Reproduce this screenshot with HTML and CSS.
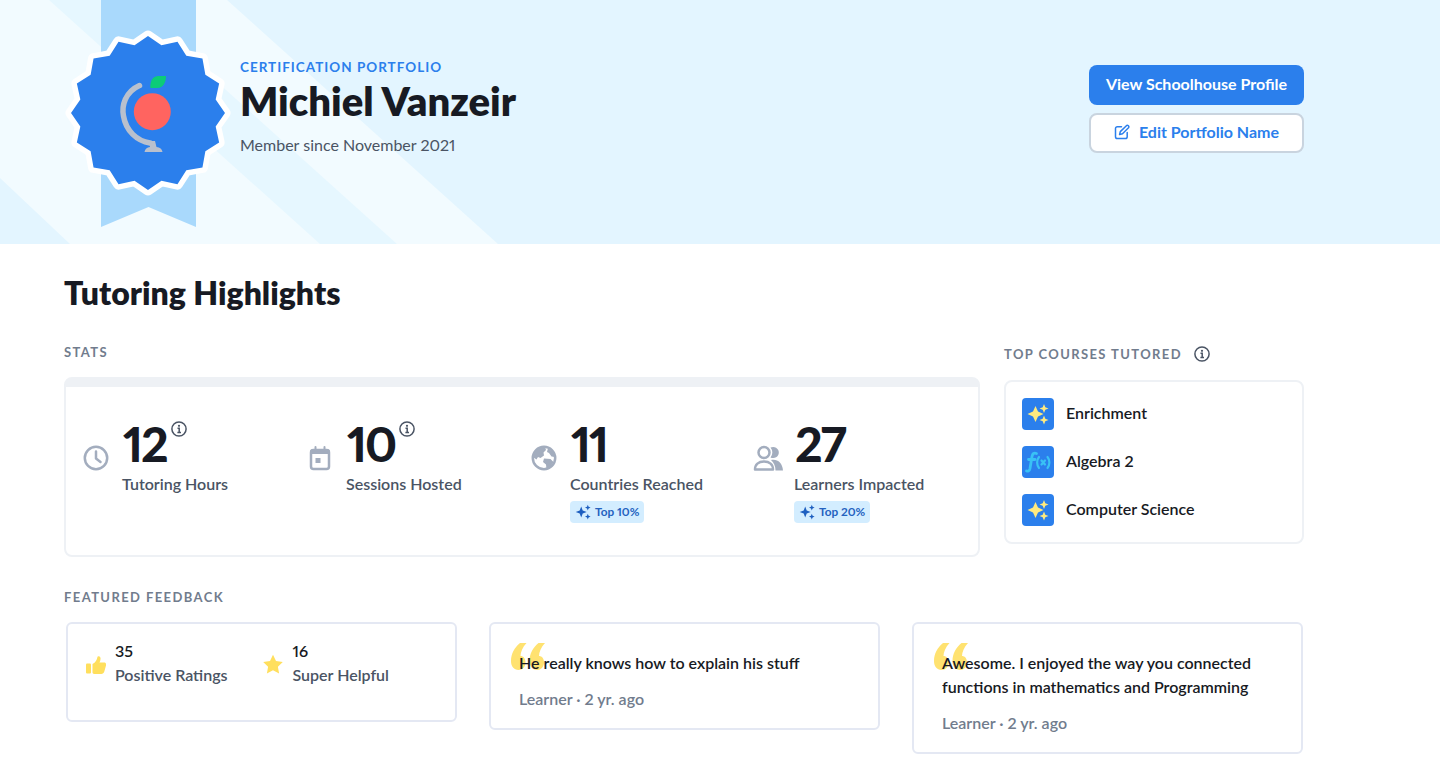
FILE: index.html
```html
<!DOCTYPE html>
<html lang="en">
<head>
<meta charset="utf-8">
<title>Certification Portfolio</title>
<link rel="stylesheet" href="styles.css">
</head>
<body>
<header class="banner">
  <svg class="banner-bg" viewBox="0 0 1440 244" preserveAspectRatio="none" aria-hidden="true">
    <polygon class="band-a" points="0,0 227,0 498,244 70,244 0,178"/>
    <polygon class="band-b" points="49,0 126,0 397,244 320,244"/>
  </svg>
  <svg class="medal" viewBox="0 0 176 244" width="176" height="244" aria-hidden="true">
    <polygon class="ribbon" points="37,0 132,0 132,227 84.5,207 37,227"/>
    <g transform="translate(84 113)">
      <polygon class="seal-edge" points="0,-77 13.46,-67.67 29.47,-71.14 38.34,-57.37 54.45,-54.45 57.37,-38.34 71.14,-29.47 67.67,-13.46 77,0 67.67,13.46 71.14,29.47 57.37,38.34 54.45,54.45 38.34,57.37 29.47,71.14 13.46,67.67 0,77 -13.46,67.67 -29.47,71.14 -38.34,57.37 -54.45,54.45 -57.37,38.34 -71.14,29.47 -67.67,13.46 -77,0 -67.67,-13.46 -71.14,-29.47 -57.37,-38.34 -54.45,-54.45 -38.34,-57.37 -29.47,-71.14 -13.46,-67.67"/>
      <polygon class="seal" points="0,-77 13.46,-67.67 29.47,-71.14 38.34,-57.37 54.45,-54.45 57.37,-38.34 71.14,-29.47 67.67,-13.46 77,0 67.67,13.46 71.14,29.47 57.37,38.34 54.45,54.45 38.34,57.37 29.47,71.14 13.46,67.67 0,77 -13.46,67.67 -29.47,71.14 -38.34,57.37 -54.45,54.45 -57.37,38.34 -71.14,29.47 -67.67,13.46 -77,0 -67.67,-13.46 -71.14,-29.47 -57.37,-38.34 -54.45,-54.45 -38.34,-57.37 -29.47,-71.14 -13.46,-67.67"/>
    </g>
    <path class="globe-arc" d="M75.5 85.5C61 92 57.500 106 59.500 116C62 131 73 141 86 143"/>
    <path class="globe-base" d="M85 141h6l1.500 6c3.500.5 5.500 2 6 5h-18c.5-3 2.500-4.500 5.500-5z"/>
    <circle class="apple" cx="88.300" cy="111.700" r="18.500"/>
    <path class="leaf" d="M87 82c1-4 4-6 8-6h7c0 0 0 4-1 6-1.500 4-4 6-8 6h-6.500c-.5-2 0-4 .5-6z"/>
  </svg>
  <div class="intro">
    <p class="eyebrow">CERTIFICATION PORTFOLIO</p>
    <h1 class="name">Michiel Vanzeir</h1>
    <p class="since">Member since November 2021</p>
  </div>
  <div class="actions">
    <a class="btn btn-primary" href="#">View Schoolhouse Profile</a>
    <a class="btn btn-outline" href="#">
      <svg class="btn-icon" viewBox="0 0 16 16" width="16" height="16" aria-hidden="true"><path d="M7.500 2.800H3.300A1.800 1.800 0 0 0 1.500 4.600v8.100a1.800 1.800 0 0 0 1.800 1.800h8.100a1.800 1.800 0 0 0 1.800-1.800V8.500"/><path d="M12.400 1.700a1.500 1.500 0 0 1 2.100 2.100L8.500 9.800l-2.900.7.700-2.900z"/></svg>
      Edit Portfolio Name
    </a>
  </div>
</header>

<main class="content">
  <h2 class="title">Tutoring Highlights</h2>
  <div class="top-grid">
    <section>
      <h3 class="label label-stats">STATS</h3>
      <div class="stats-card">
        <div class="stat">
          <span class="stat-icon">
            <svg viewBox="0 0 26 26" width="26" height="26" aria-hidden="true"><circle class="line" cx="13" cy="13" r="11.200"/><path class="line" d="M13 6.500V13.500l4.500 3.500"/></svg>
          </span>
          <div>
            <div class="num-row"><span class="num">12</span><svg class="info" viewBox="0 0 16 16" width="16" height="16" aria-hidden="true"><circle cx="8" cy="8" r="7.100"/><circle class="dot" cx="8" cy="4.800" r="1.100"/><path d="M6.500 7.300H8.200V11.600M6.400 11.600H10"/></svg></div>
            <div class="stat-label">Tutoring Hours</div>
          </div>
        </div>
        <div class="stat">
          <span class="stat-icon">
            <svg viewBox="0 0 24 26" width="24" height="26" aria-hidden="true"><path class="solid" d="M2 7a3 3 0 0 1 3-3h1.500V2a1 1 0 0 1 2 0v2h7V2a1 1 0 0 1 2 0v2H19a3 3 0 0 1 3 3v2H2z"/><rect class="line" x="3" y="5" width="18" height="19" rx="2.500"/><rect class="solid" x="7.500" y="13" width="5" height="5"/></svg>
          </span>
          <div>
            <div class="num-row"><span class="num">10</span><svg class="info" viewBox="0 0 16 16" width="16" height="16" aria-hidden="true"><circle cx="8" cy="8" r="7.100"/><circle class="dot" cx="8" cy="4.800" r="1.100"/><path d="M6.500 7.300H8.200V11.600M6.400 11.600H10"/></svg></div>
            <div class="stat-label">Sessions Hosted</div>
          </div>
        </div>
        <div class="stat">
          <span class="stat-icon">
            <svg viewBox="0 0 26 26" width="26" height="26" aria-hidden="true"><circle class="line" cx="13" cy="13" r="11.200"/><path class="solid" d="M5 5.500C8 2.500 12 1.500 14 2l1 3-2.500 2.500.5 3-3.500 2.500-2.500-1-1.500 2.500-3-2C1.500 9.500 3 7.500 5 5.500z"/><path class="solid" d="M13 13.500l6.500.5 3 3-4 6.500-3 1-.5-5-3-2.500z"/><path class="solid" d="M17 3l5 4 2 5-3.500-.5-2.500-3.500-2-1z"/></svg>
          </span>
          <div>
            <div class="num-row"><span class="num">11</span></div>
            <div class="stat-label">Countries Reached</div>
            <span class="rank"><svg viewBox="0 0 16 16" width="16" height="16" aria-hidden="true"><path d="M6.200 2.500l1.500 4 4 1.500-4 1.500-1.500 4-1.500-4-4-1.500 4-1.500z"/><path d="M12.800 .8l.8 2 2 .8-2 .8-.8 2-.8-2-2-.8 2-.8z"/><path d="M12.800 9.800l.8 2 2 .8-2 .8-.8 2-.8-2-2-.8 2-.8z"/></svg>Top 10%</span>
          </div>
        </div>
        <div class="stat">
          <span class="stat-icon">
            <svg class="users" viewBox="0 0 30 26" width="30" height="26" aria-hidden="true"><circle class="line" cx="11" cy="7.500" r="5.500"/><path class="line" d="M2 24.500c0-5 3.500-8 9-8s9 3 9 8z"/><path class="solid" d="M17.500 2.600a5.600 5.600 0 1 1 0 9.800 7.500 7.500 0 0 0 0-9.800z"/><path class="solid" d="M18 15c6-1.500 11.500 2.500 12 10.500h-7.500c0-4-1.500-8-4.500-10.500z"/></svg>
          </span>
          <div>
            <div class="num-row"><span class="num">27</span></div>
            <div class="stat-label">Learners Impacted</div>
            <span class="rank"><svg viewBox="0 0 16 16" width="16" height="16" aria-hidden="true"><path d="M6.200 2.500l1.500 4 4 1.500-4 1.500-1.500 4-1.500-4-4-1.500 4-1.500z"/><path d="M12.800 .8l.8 2 2 .8-2 .8-.8 2-.8-2-2-.8 2-.8z"/><path d="M12.800 9.800l.8 2 2 .8-2 .8-.8 2-.8-2-2-.8 2-.8z"/></svg>Top 20%</span>
          </div>
        </div>
      </div>
    </section>
    <section>
      <h3 class="label label-courses">TOP COURSES TUTORED<svg class="info" viewBox="0 0 16 16" width="16" height="16" aria-hidden="true"><circle cx="8" cy="8" r="7.100"/><circle class="dot" cx="8" cy="4.800" r="1.100"/><path d="M6.500 7.300H8.200V11.600M6.400 11.600H10"/></svg></h3>
      <ul class="courses">
        <li class="course"><span class="course-icon"><svg viewBox="0 0 32 32" width="32" height="32" aria-hidden="true"><path d="M13.500 8l2.500 5.500 5.500 2.500-5.500 2.500-2.500 5.500-2.500-5.500L5.500 16l5.500-2.500z"/><path d="M22 6l1.300 3.200 3.200 1.300-3.200 1.300L22 15l-1.300-3.200-3.200-1.300 3.200-1.300z"/><path d="M22 17.500l1.300 3.200 3.200 1.300-3.200 1.300-1.300 3.200-1.300-3.200-3.200-1.300 3.200-1.300z"/></svg></span><span class="course-name">Enrichment</span></li>
        <li class="course"><span class="course-icon"><svg class="fx" viewBox="0 0 32 32" width="32" height="32" aria-hidden="true"><path class="fx-f" d="M14.500 7.500c-2.500-1-4 0-4.500 3l-2 12c-.5 2.500-2 3-3.500 2.500M6.500 13.500h6.500"/><path d="M17 11c-2.500 3-2.500 8 0 11M25.500 11c2.500 3 2.500 8 0 11M19.500 14.500l3.500 4M23 14.500l-3.500 4"/></svg></span><span class="course-name">Algebra 2</span></li>
        <li class="course"><span class="course-icon"><svg viewBox="0 0 32 32" width="32" height="32" aria-hidden="true"><path d="M13.500 8l2.500 5.500 5.500 2.500-5.500 2.500-2.500 5.500-2.500-5.500L5.500 16l5.500-2.500z"/><path d="M22 6l1.300 3.200 3.200 1.300-3.200 1.300L22 15l-1.300-3.200-3.200-1.300 3.200-1.300z"/><path d="M22 17.500l1.300 3.200 3.200 1.300-3.200 1.300-1.300 3.200-1.300-3.200-3.200-1.300 3.200-1.300z"/></svg></span><span class="course-name">Computer Science</span></li>
      </ul>
    </section>
  </div>

  <h3 class="label label-feedback">FEATURED FEEDBACK</h3>
  <div class="feedback-grid">
    <article class="fb-card fb-ratings">
      <div class="rating">
        <svg viewBox="0 0 20 18" width="20" height="18" aria-hidden="true"><rect x="0" y="7.500" width="5" height="10" rx="1"/><path d="M6.500 8c3-1.500 4.500-4 5-7.200.2-1 2.800-.8 3 1.200.2 1.500-.3 3-1 4.500h4.500c1.700 0 2.500 1.500 2 3l-1.700 6c-.4 1.600-1.500 2.500-3 2.500H9c-1 0-2.500-.5-2.500-1.500z"/></svg>
        <div><div class="rating-num">35</div><div class="rating-label">Positive Ratings</div></div>
      </div>
      <div class="rating rating-star">
        <svg viewBox="0 0 22 20" width="22" height="20" aria-hidden="true"><path d="M11 .8l3 6.200 6.800 1-4.900 4.700 1.200 6.800L11 16.300 4.900 19.500l1.200-6.800L1.200 8 8 7z"/></svg>
        <div><div class="rating-num">16</div><div class="rating-label">Super Helpful</div></div>
      </div>
    </article>
    <article class="fb-card fb-quote">
      <svg class="quote-mark" viewBox="0 0 34 27" width="34" height="27" aria-hidden="true"><path d="M9 0h6.500C11.500 4.500 9.500 9 9.500 13c2.500 0 5 2 5 6.500 0 4.500-3 7.500-7 7.500C3 27 0 23.500 0 18 0 10.500 3.500 4.500 9 0z"/><path d="M27.500 0H34c-4 4.500-6 9-6 13 2.500 0 5 2 5 6.500 0 4.500-3 7.500-7 7.500-4.500 0-7.500-3.500-7.500-9 0-7.500 3.500-13.500 9-18z"/></svg>
      <p class="quote-text">He really knows how to explain his stuff</p>
      <p class="quote-meta">Learner · 2 yr. ago</p>
    </article>
    <article class="fb-card fb-quote">
      <svg class="quote-mark" viewBox="0 0 34 27" width="34" height="27" aria-hidden="true"><path d="M9 0h6.500C11.500 4.500 9.500 9 9.500 13c2.500 0 5 2 5 6.500 0 4.500-3 7.500-7 7.500C3 27 0 23.500 0 18 0 10.500 3.500 4.500 9 0z"/><path d="M27.500 0H34c-4 4.500-6 9-6 13 2.500 0 5 2 5 6.500 0 4.500-3 7.500-7 7.500-4.500 0-7.500-3.500-7.500-9 0-7.500 3.500-13.500 9-18z"/></svg>
      <p class="quote-text">Awesome. I enjoyed the way you connected functions in mathematics and Programming</p>
      <p class="quote-meta">Learner · 2 yr. ago</p>
    </article>
  </div>
</main>
</body>
</html>
```
FILE: styles.css
```css
* { box-sizing: border-box; }
html, body { margin: 0; padding: 0; }
body {
  font-family: "Lato", "Liberation Sans", sans-serif;
  font-size: 16px;
  line-height: 24px;
  color: #171a23;
  background: #fff;
  overflow: hidden;
  font-variant-numeric: proportional-nums;
}
h1, h2, h3, p, ul { margin: 0; padding: 0; }
ul { list-style: none; }

.banner {
  position: relative;
  display: flex;
  align-items: center;
  height: 244px;
  padding: 0 136px 0 64px;
  background: #e3f5ff;
  overflow: hidden;
}
.banner-bg { position: absolute; inset: 0; width: 100%; height: 100%; }
.band-a { fill: #f2fbff; }
.band-b { fill: #e6f7ff; }
.medal, .intro, .actions { position: relative; }
.medal { flex: none; }
.ribbon { fill: #a9d9fc; }
.seal-edge { fill: #fff; stroke: #fff; stroke-width: 11; stroke-linejoin: round; }
.seal { fill: #2b7fec; }
.globe-arc { fill: none; stroke: #b9c0cd; stroke-width: 5.500; stroke-linecap: round; }
.globe-base { fill: #b9c0cd; }
.apple { fill: #ff6460; }
.leaf { fill: #0ccc78; }

.intro { padding-bottom: 28px; flex: 1; }
.eyebrow { font-size: 13.500px; line-height: 16px; font-weight: 700; letter-spacing: 1px; color: #2b7fec; }
.name { font-size: 40px; line-height: 48px; font-weight: 800; color: #171a23; margin-top: 2px; }
.since { font-size: 16px; line-height: 24px; color: #4a5464; margin-top: 8px; }

.actions { display: flex; flex-direction: column; gap: 8px; width: 215px; padding-bottom: 27px; }
.btn {
  display: flex;
  align-items: center;
  justify-content: center;
  gap: 9px;
  height: 40px;
  padding-bottom: 2px;
  border-radius: 8px;
  font-size: 16px;
  font-weight: 700;
  text-decoration: none;
}
.btn-primary { background: #2b7fec; color: #fff; }
.btn-outline { background: #fff; color: #2b7fec; border: 2px solid #c9d4df; }
.btn-icon { fill: none; stroke: #2b7fec; stroke-width: 1.500; stroke-linejoin: round; stroke-linecap: round; }

.content { padding: 0 136px 0 64px; }
.title { font-size: 32px; line-height: 40px; font-weight: 800; margin-top: 29px; color: #171a23; }
.top-grid { display: grid; grid-template-columns: 916px 300px; column-gap: 24px; margin-top: 31px; }

.label { font-size: 13px; line-height: 16px; font-weight: 700; letter-spacing: 1.400px; color: #717c8d; }
.label-stats { margin-bottom: 17px; }
.label-courses { display: flex; align-items: center; gap: 12px; margin: 2px 0 18px; height: 16px; }
.label-feedback { margin: 32px 0 17px; }

.stats-card {
  display: grid;
  grid-template-columns: repeat(4, 224px);
  height: 180px;
  padding: 33px 0 0 16px;
  border: 2px solid #eef1f5;
  border-top: 10px solid #eef1f5;
  border-radius: 8px;
}
.stat { display: flex; gap: 12px; }
.stat-icon { flex: none; display: flex; justify-content: center; width: 28px; height: 26px; margin-top: 25px; }
.stat-icon .line { fill: none; stroke: #a3adbe; stroke-width: 2.500; stroke-linecap: round; stroke-linejoin: round; }
.stat-icon .solid { fill: #a3adbe; }
.users { flex: none; margin: 0 -1px; }
.num-row { display: flex; align-items: flex-start; gap: 4px; }
.num { margin-left: 1px; font-size: 48px; line-height: 48px; font-weight: 900; letter-spacing: -2px; color: #171a23; }
.info { flex: none; fill: none; stroke: #4a5464; stroke-width: 1.500; }
.num-row .info { margin-top: 1px; }
.info .dot { fill: #4a5464; stroke: none; }
.stat-label { font-size: 16px; line-height: 24px; font-weight: 600; color: #4a5464; margin-top: 4px; }
.rank {
  display: inline-flex;
  align-items: center;
  gap: 4px;
  height: 22px;
  margin-top: 5px;
  padding: 0 5px;
  border-radius: 4px;
  background: #d3edff;
  color: #2462bf;
  font-size: 11.800px;
  line-height: 16px;
  font-weight: 700;
}
.rank svg { fill: #1d5fc0; }

.courses {
  display: flex;
  flex-direction: column;
  gap: 16px;
  padding: 16px;
  border: 2px solid #eef1f5;
  border-radius: 8px;
}
.course { display: flex; align-items: center; gap: 12px; height: 32px; font-weight: 600; color: #171a23; }
.course-name { margin-bottom: 2px; }
.course-icon { width: 32px; height: 32px; border-radius: 4px; background: #2b7fec; }
.course-icon svg { display: block; fill: #ffea7f; }
.course-icon .fx { fill: none; stroke: #39c2f5; stroke-width: 2.200; stroke-linecap: round; }
.course-icon .fx-f { stroke-width: 2.800; }

.feedback-grid { display: grid; grid-template-columns: repeat(3, 391px); column-gap: 32px; align-items: start; margin-left: 2px; }
.fb-card { position: relative; border: 2px solid #e4e8f3; border-radius: 6px; background: #fff; }
.fb-ratings { display: flex; height: 100px; padding: 15px 18px 0; }
.rating { display: flex; gap: 9px; width: 177px; }
.rating svg { flex: none; margin-top: 17px; fill: #ffdf5d; }
.rating-star svg { margin-top: 15px; }
.rating-num { font-weight: 600; color: #171a23; }
.rating-label { font-weight: 600; color: #4a5464; }
.fb-quote { padding: 27px 28px 17px; }
.quote-mark { position: absolute; left: 20px; top: 19px; fill: #ffe270; }
.quote-text { position: relative; font-weight: 600; color: #171a23; }
.quote-meta { margin-top: 12px; font-weight: 600; color: #717c8d; }
```
